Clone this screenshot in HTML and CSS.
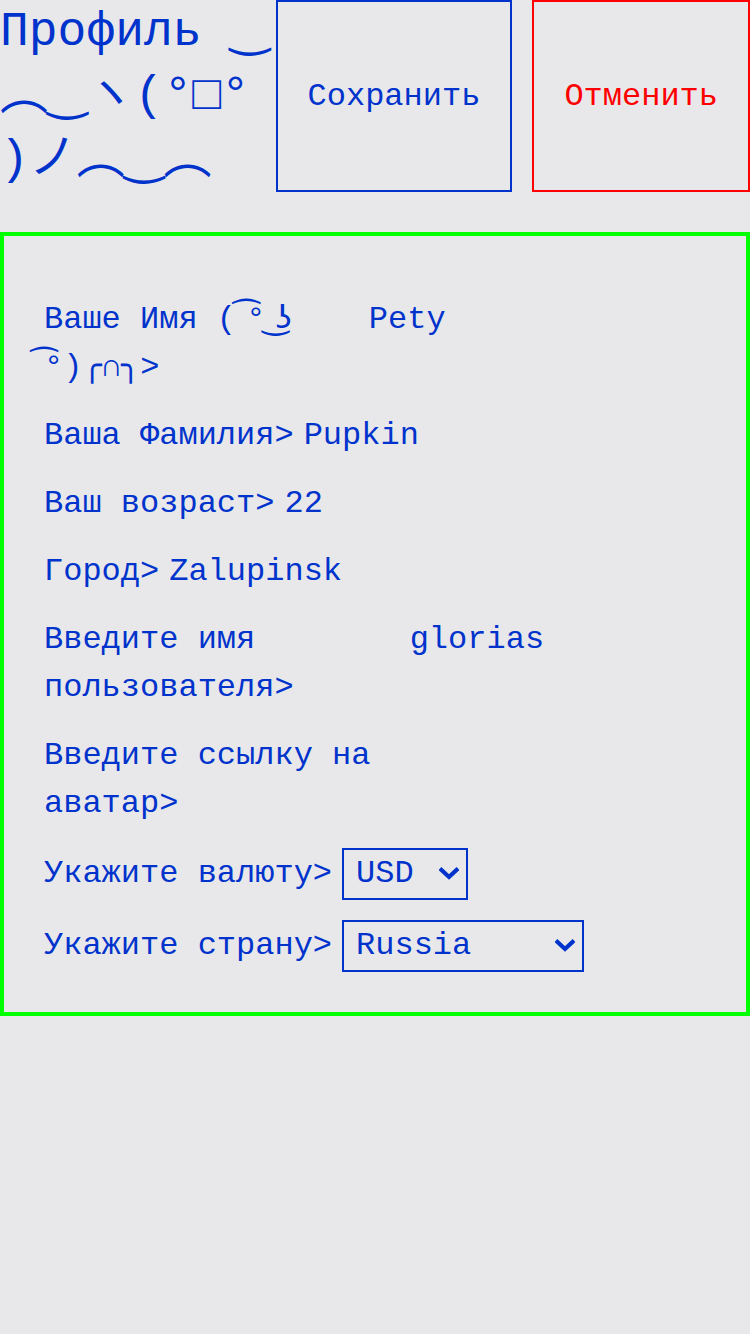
FILE: index.html
```html
<!DOCTYPE html>
<html lang="ru">
<head>
<meta charset="utf-8">
<title>Профиль</title>
<link rel="stylesheet" href="styles.css">
</head>
<body>
<header class="header">
  <h1 class="title">Профиль ‿︵‿ヽ(°□° )ノ︵‿︵</h1>
  <div class="actions">
    <button class="btn btn-save" type="button">Сохранить</button>
    <button class="btn btn-cancel" type="button">Отменить</button>
  </div>
</header>
<form class="profile">
  <label class="row"><span class="label">Ваше Имя (<span class="mark"> ͡</span>°<span class="mark"> ͜ʖ</span><span class="mark"> ͡</span>°)╭∩╮&gt;</span><input class="field" type="text" value="Pety"></label>
  <label class="row"><span class="label">Ваша Фамилия&gt;</span><input class="field" type="text" value="Pupkin"></label>
  <label class="row"><span class="label">Ваш возраст&gt;</span><input class="field" type="text" value="22"></label>
  <label class="row"><span class="label">Город&gt;</span><input class="field" type="text" value="Zalupinsk"></label>
  <label class="row"><span class="label">Введите имя пользователя&gt;</span><input class="field" type="text" value="glorias"></label>
  <label class="row"><span class="label">Введите ссылку на аватар&gt;</span><input class="field" type="text" value=""></label>
  <label class="row"><span class="label">Укажите валюту&gt;</span><span class="select-wrap"><select class="select select-currency"><option>USD</option><option>EUR</option><option>RUB</option></select><svg class="chevron" viewBox="0 0 20 14" width="20" height="14" aria-hidden="true"><path d="M2.5 3 L10 10 L17.5 3" fill="none" stroke="currentColor" stroke-width="4.2" stroke-linecap="square"/></svg></span></label>
  <label class="row"><span class="label">Укажите страну&gt;</span><span class="select-wrap"><select class="select select-country"><option>Russia</option><option>Ukraine</option><option>Belarus</option></select><svg class="chevron" viewBox="0 0 20 14" width="20" height="14" aria-hidden="true"><path d="M2.5 3 L10 10 L17.5 3" fill="none" stroke="currentColor" stroke-width="4.2" stroke-linecap="square"/></svg></span></label>
</form>
</body>
</html>
```
FILE: styles.css
```css
html, body {
  margin: 0;
  padding: 0;
  background: #e8e8ea;
}

body {
  font-family: "Liberation Mono", "DejaVu Sans", "Noto Sans CJK JP", monospace;
  color: #0033cc;
  width: 750px;
}

.header {
  display: flex;
  align-items: stretch;
}

.title {
  flex: 1 1 0;
  min-width: 0;
  margin: 0;
  font-size: 48px;
  line-height: 64px;
  font-weight: normal;
  color: #0033cc;
}

.actions {
  display: flex;
  gap: 20px;
}

.btn {
  font-family: inherit;
  font-size: 32px;
  background: transparent;
  border: 2px solid #0033cc;
  color: #0033cc;
  padding: 0 30px;
  margin: 0;
}

.btn-cancel {
  border-color: #ff0000;
  color: #ff0000;
}

.profile {
  margin-top: 40px;
  border: 4px solid #00ff00;
  padding: 60px 40px 40px;
  display: flex;
  flex-direction: column;
  gap: 20px;
  font-size: 32px;
  line-height: 48px;
}

.row {
  display: flex;
  align-items: baseline;
  gap: 10px;
}

.label {
  flex: 0 1 auto;
}

.mark {
  font-family: "DejaVu Sans", sans-serif;
  line-height: 0;
}

.field {
  flex: 0 1 400px;
  min-width: 0;
  border: none;
  background: transparent;
  padding: 0;
  margin: 0;
  font-family: inherit;
  font-size: 32px;
  line-height: 48px;
  color: #0033cc;
  outline: none;
}

.select-wrap {
  flex: none;
  position: relative;
  display: inline-block;
}

.select {
  -webkit-appearance: none;
  appearance: none;
  display: block;
  font-family: inherit;
  font-size: 32px;
  line-height: 48px;
  color: #0033cc;
  background: transparent;
  border: 2px solid #0033cc;
  border-radius: 0;
  height: 52px;
  padding: 0 40px 0 12px;
  margin: 0;
  outline: none;
}

.chevron {
  position: absolute;
  right: 9px;
  top: 50%;
  margin-top: -7px;
  color: #0033cc;
  pointer-events: none;
}

.select-currency {
  width: 126px;
}

.select-country {
  width: 242px;
}
```
